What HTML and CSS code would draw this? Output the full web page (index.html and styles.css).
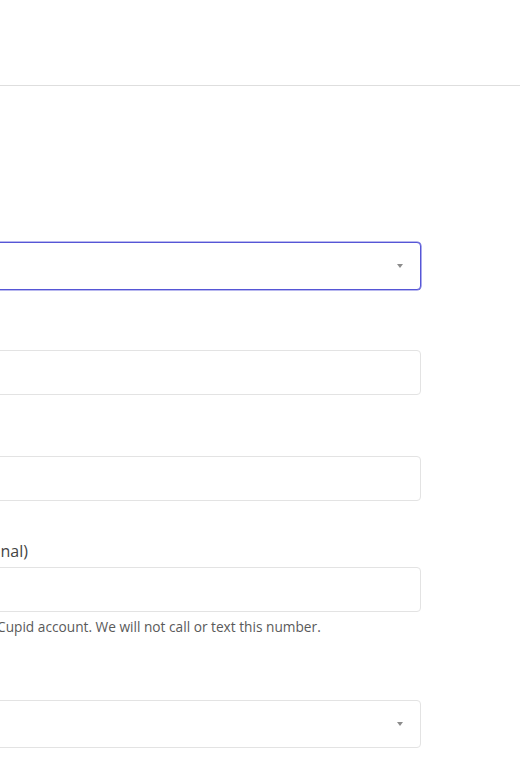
FILE: index.html
```html
<!DOCTYPE html>
<html lang="en">
<head>
<meta charset="utf-8">
<title>Account details</title>
<link rel="stylesheet" href="styles.css">
</head>
<body>
<div class="page">
  <header class="topbar"></header>
  <main class="content">
    <form class="form">
      <div class="field field-first">
        <label class="label">Gender</label>
        <div class="select is-focused">
          <span class="select-value"></span>
          <svg class="caret" width="6" height="4" viewBox="0 0 6 4"><path d="M0 0H6L3 4Z" fill="#8c8c8c"/></svg>
        </div>
      </div>
      <div class="field">
        <label class="label">Email</label>
        <div class="input"></div>
      </div>
      <div class="field">
        <label class="label">Name</label>
        <div class="input"></div>
      </div>
      <div class="field field-phone">
        <label class="label">Phone number (optional)</label>
        <div class="input"></div>
        <p class="help">Used to protect your OkCupid account. We will not call or text this number.</p>
      </div>
      <div class="field field-last">
        <label class="label">Country</label>
        <div class="select">
          <span class="select-value"></span>
          <svg class="caret" width="6" height="4" viewBox="0 0 6 4"><path d="M0 0H6L3 4Z" fill="#8c8c8c"/></svg>
        </div>
      </div>
    </form>
  </main>
</div>
</body>
</html>
```
FILE: styles.css
```css
html, body {
  margin: 0;
  padding: 0;
  background: #ffffff;
}
body {
  font-family: "Open Sans", "Noto Sans", "DejaVu Sans", sans-serif;
  color: #444;
  overflow: hidden;
}
.page {
  width: 520px;
  height: 780px;
  overflow: hidden;
}
.topbar {
  height: 85px;
  border-bottom: 1px solid #dedede;
}
.content {
  padding-top: 130px;
}
.form {
  margin: 0 0 0 -159px;
  width: 580px;
  display: flex;
  flex-direction: column;
}
.field {
  display: flex;
  flex-direction: column;
  gap: 6px;
  margin-bottom: 35px;
}
.field-first {
  margin-bottom: 34px;
}
.field-phone {
  margin-top: 5px;
  margin-bottom: 38px;
}
.label {
  font-size: 16px;
  line-height: 20px;
  color: #444;
}
.input, .select {
  box-sizing: border-box;
  height: 45px;
  border: 1px solid #e3e3e3;
  border-radius: 4px;
  background: #fff;
}
.select {
  height: 48px;
  display: flex;
  align-items: center;
  justify-content: space-between;
  padding: 0 17px 0 14px;
}
.select.is-focused {
  border-color: #5656d6;
  box-shadow: 0 0 0 0.6px #7272e0;
}
.caret {
  display: block;
}
.help {
  margin: 0;
  padding-left: 3px;
  font-size: 13.7px;
  line-height: 18px;
  color: #5a5a5a;
}
```
